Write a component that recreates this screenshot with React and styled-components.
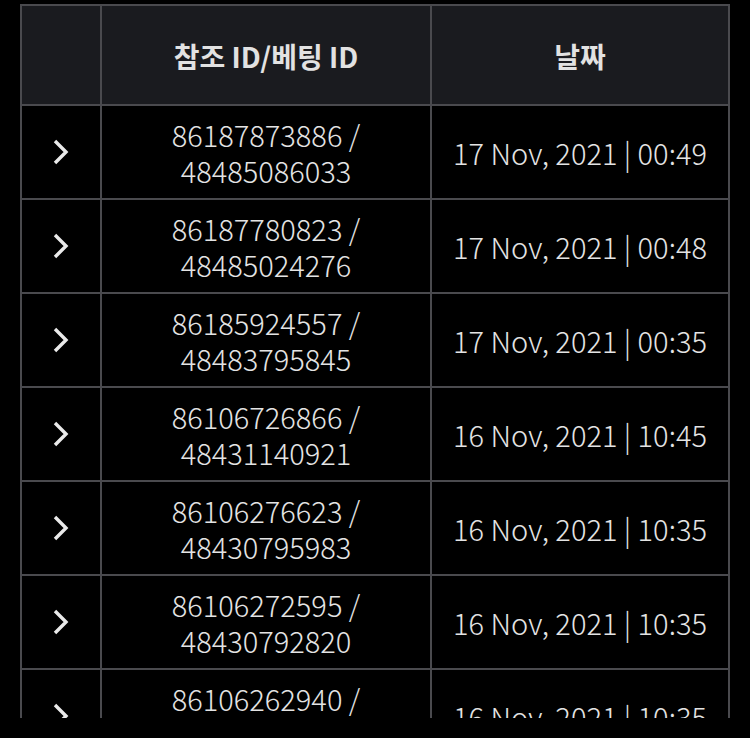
import React from 'react'
import styled, { createGlobalStyle } from 'styled-components'

const GlobalStyle = createGlobalStyle`
  html, body {
    margin: 0;
    padding: 0;
    background: #000;
  }
  * {
    box-sizing: border-box;
  }
`

const Viewport = styled.div`
  height: 718px;
  overflow: hidden;
  padding: 4px 21px 0 20px;
  font-family: 'Noto Sans CJK KR', 'Noto Sans', sans-serif;
  color: #e4e4e4;
`

const Table = styled.div`
  display: grid;
  grid-template-columns: 78px 328px 296px;
  grid-auto-rows: 92px;
  grid-template-rows: 98px;
  gap: 2px;
  padding: 2px;
  background: #4a4a4e;
  width: 710px;
`

const HeadCell = styled.div`
  background: #1a1b1f;
  display: flex;
  align-items: center;
  justify-content: center;
  font-size: 28px;
  font-weight: 700;
  color: #e2e2e2;
  padding-top: 2px;
`

const Cell = styled.div`
  background: #000;
  display: flex;
  align-items: center;
  justify-content: center;
  text-align: center;
  font-size: 29px;
  font-weight: 300;
  line-height: 36px;
  color: #e4e4e4;
`

const Chevron = () => (
  <svg width="18" height="26" viewBox="0 0 18 26">
    <path d="M3 2 L14 13 L3 24" fill="none" stroke="#eaeaea" strokeWidth="3.4" />
  </svg>
)

const rows = [
  ['86187873886', '48485086033', '17 Nov, 2021', '00:49'],
  ['86187780823', '48485024276', '17 Nov, 2021', '00:48'],
  ['86185924557', '48483795845', '17 Nov, 2021', '00:35'],
  ['86106726866', '48431140921', '16 Nov, 2021', '10:45'],
  ['86106276623', '48430795983', '16 Nov, 2021', '10:35'],
  ['86106272595', '48430792820', '16 Nov, 2021', '10:35'],
  ['86106262940', '48430785561', '16 Nov, 2021', '10:35'],
]

export default function App() {
  return (
    <>
      <GlobalStyle />
      <Viewport>
        <Table>
          <HeadCell />
          <HeadCell>참조 ID/베팅 ID</HeadCell>
          <HeadCell>날짜</HeadCell>
          {rows.map(([ref, bet, day, time]) => (
            <React.Fragment key={ref}>
              <Cell><Chevron /></Cell>
              <Cell>{ref} /<br />{bet}</Cell>
              <Cell>{day} | {time}</Cell>
            </React.Fragment>
          ))}
        </Table>
      </Viewport>
    </>
  )
}
